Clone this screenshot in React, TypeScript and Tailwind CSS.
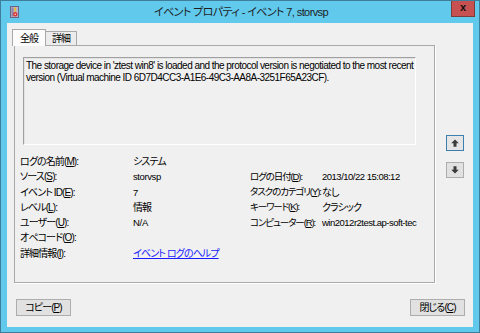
import React from "react";

function Mn({ pre, k, post }: { pre: string; k: string; post: string }) {
  return (
    <span className="whitespace-nowrap">
      {pre}
      <span className="underline underline-offset-[1px]">{k}</span>
      {post}
    </span>
  );
}

function Arrow({ up }: { up: boolean }) {
  return (
    <svg width="8" height="8" viewBox="0 0 8 8" className={up ? "" : "rotate-180"}>
      <path d="M4 0.5 L7.8 4.3 L5.5 4.3 L5.5 7.8 L2.5 7.8 L2.5 4.3 L0.2 4.3 Z" fill="#3c3c3c" />
    </svg>
  );
}

export default function App() {
  const rows: Array<[React.ReactNode, React.ReactNode, React.ReactNode, React.ReactNode]> = [
    [<Mn pre="ログの名前(" k="M" post="):" />, <span>システム</span>, null, null],
    [
      <Mn pre="ソース(" k="S" post="):" />,
      <span className="text-[9.5px] tracking-[-0.4px]">storvsp</span>,
      <Mn pre="ログの日付(" k="D" post="):" />,
      <span className="text-[9.5px] tracking-[-0.5px]">2013/10/22 15:08:12</span>,
    ],
    [
      <Mn pre="イベント ID(" k="E" post="):" />,
      <span className="text-[9.5px]">7</span>,
      <Mn pre="タスクのカテゴリ(" k="Y" post="):" />,
      <span>なし</span>,
    ],
    [
      <Mn pre="レベル(" k="L" post="):" />,
      <span>情報</span>,
      <Mn pre="キーワード(" k="K" post="):" />,
      <span>クラシック</span>,
    ],
    [
      <Mn pre="ユーザー(" k="U" post="):" />,
      <span className="text-[9.5px] tracking-[-0.3px]">N/A</span>,
      <Mn pre="コンピューター(" k="R" post="):" />,
      <span className="text-[9.5px] tracking-[-0.5px] whitespace-nowrap">win2012r2test.ap-soft-tec</span>,
    ],
    [<Mn pre="オペコード(" k="O" post="):" />, null, null, null],
    [
      <Mn pre="詳細情報(" k="I" post="):" />,
      <span className="text-[#1a1aff] underline underline-offset-[1px] whitespace-nowrap">イベント ログのヘルプ</span>,
      null,
      null,
    ],
  ];

  return (
    <div className="w-[480px] h-[333px] bg-[#60c9ec] border border-[#3e7e9a] flex flex-col text-black font-['Liberation_Sans','Noto_Sans_CJK_JP',sans-serif] [font-feature-settings:'palt'] text-[10px] tracking-[-0.9px] overflow-hidden">
      {/* title bar */}
      <div className="h-[22px] shrink-0 relative flex items-center justify-center">
        <svg className="absolute left-[9px] top-[5px]" width="9" height="12" viewBox="0 0 9 12">
          <rect x="0.5" y="0.5" width="8" height="11" fill="#b9b3cf" stroke="#6b6584" />
          <rect x="1.5" y="1.5" width="2" height="9" fill="#8d86a8" />
          <rect x="4.5" y="1.5" width="1.6" height="4" fill="#f2c21b" />
          <circle cx="5.2" cy="8.3" r="2.2" fill="#d8332f" />
          <rect x="4.6" y="7.7" width="1.2" height="1.2" fill="#fff" />
        </svg>
        <span className="text-[11px] text-[#1e1e1e] tracking-[-0.6px] pl-[2px]">イベント プロパティ - イベント 7, storvsp</span>
        <div className="absolute right-[4px] top-[-1px] w-[24px] h-[17px] bg-[#c75050] border border-[#7e3b3b] border-t-0 flex items-center justify-center">
          <span className="text-[11px] font-bold leading-none text-[#111] mt-[-2px] tracking-normal">x</span>
        </div>
      </div>

      {/* client */}
      <div className="flex-1 mx-[6px] mb-[5px] bg-[#f0f0f0] flex flex-col pl-[7px] pr-[8px] pt-[6px]">
        <div className="flex">
          <div className="w-[421px] flex flex-col">
            {/* tabs */}
            <div className="h-[16px] flex items-end relative z-10">
              <div className="ml-[-2px] w-[34px] h-[17px] mb-[-1px] bg-[#fcfcfc] border border-b-0 border-[#a9a9a9] flex items-center justify-center pt-[1px]">
                全般
              </div>
              <div className="w-[31px] h-[14px] bg-[#ececec] border border-l-0 border-b-0 border-[#a9a9a9] flex items-center justify-center">
                詳細
              </div>
            </div>
            {/* panel */}
            <div className="h-[238px] border border-[#a9a9a9] shadow-[1px_1px_0_#ffffff] flex flex-col">
              <div className="ml-[8px] mt-[11px] w-[393px] h-[88px] border border-t-[#a0a0a0] border-l-[#a0a0a0] border-b-[#ffffff] border-r-[#ffffff] shadow-[inset_1px_1px_0_#e3e3e3] pl-[2px] pt-[2px] text-[10px] tracking-[-0.53px] leading-[12.3px] whitespace-nowrap">
                <div>The storage device in 'ztest win8' is loaded and the protocol version is negotiated to the most recent</div>
                <div>version (Virtual machine ID 6D7D4CC3-A1E6-49C3-AA8A-3251F65A23CF).</div>
              </div>
              <div className="ml-[5px] mt-[9px] grid grid-cols-[113px_117px_72px_1fr] auto-rows-[15.25px] items-center">
                {rows.map((r, i) => (
                  <React.Fragment key={i}>
                    <div className="whitespace-nowrap">{r[0]}</div>
                    <div className="whitespace-nowrap">{r[1]}</div>
                    <div className="whitespace-nowrap text-[9.5px] tracking-[-1.1px]">{r[2]}</div>
                    <div className="whitespace-nowrap">{r[3]}</div>
                  </React.Fragment>
                ))}
              </div>
            </div>
          </div>
          {/* up/down */}
          <div className="ml-[11px] w-[18px] pt-[106px] flex flex-col gap-[11px]">
            <div className="h-[16px] bg-[#e5e5e5] border border-[#3c7fb1] flex items-center justify-center">
              <Arrow up={true} />
            </div>
            <div className="h-[16px] bg-[#e1e1e1] border border-[#adadad] flex items-center justify-center">
              <Arrow up={false} />
            </div>
          </div>
        </div>

        {/* buttons */}
        <div className="mt-[16px] flex justify-between">
          <div className="ml-[2px] w-[55px] h-[17px] bg-[#e1e1e1] border border-[#adadad] flex items-center justify-center">
            <Mn pre="コピー(" k="P" post=")" />
          </div>
          <div className="w-[55px] h-[17px] bg-[#e1e1e1] border border-[#adadad] flex items-center justify-center">
            <Mn pre="閉じる(" k="C" post=")" />
          </div>
        </div>
      </div>
    </div>
  );
}
